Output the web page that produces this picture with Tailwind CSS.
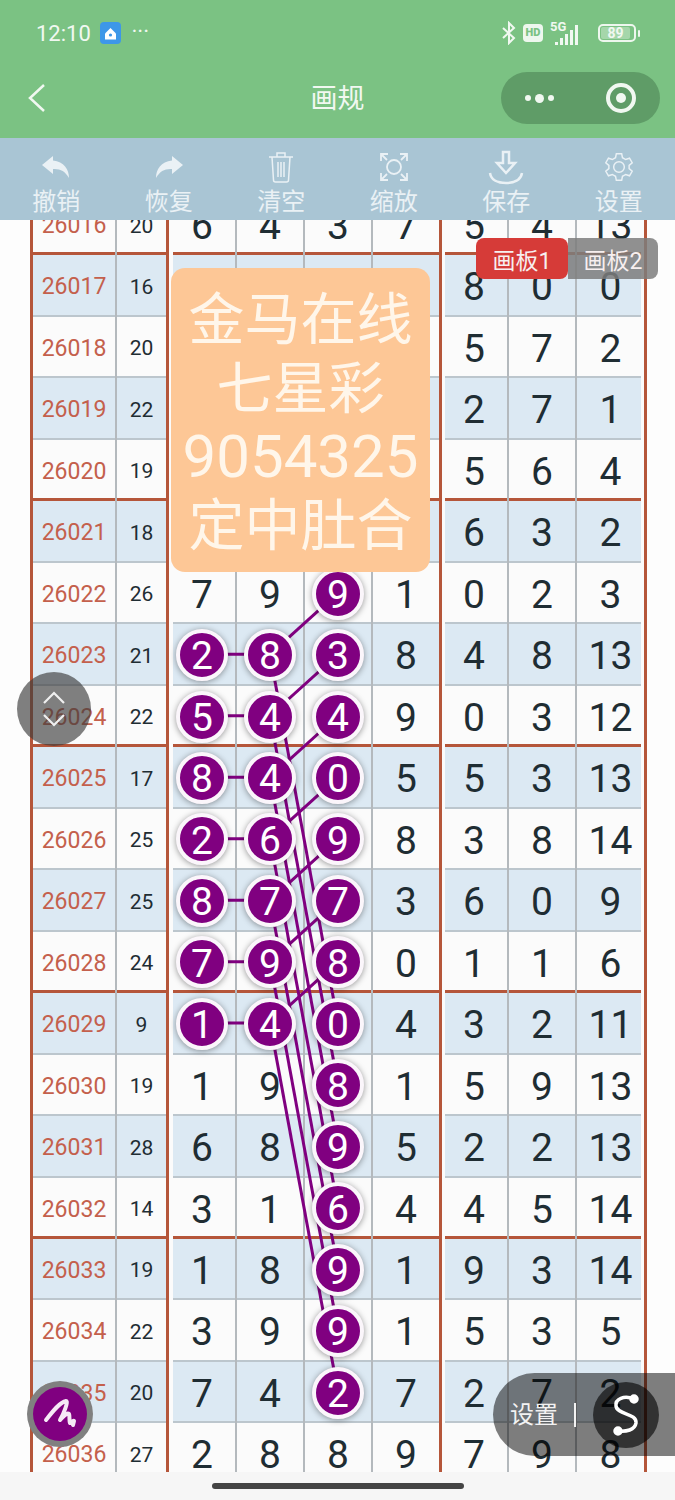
<!DOCTYPE html>
<html lang="en">
  <head>
    <meta charset="UTF-8" />
    <meta name="viewport" content="width=device-width, initial-scale=1.0" />
    <title>画规</title>
    <script src="https://cdn.jsdelivr.net/npm/@tailwindcss/browser@4"></script>
  </head>
  <body class="bg-[#fdfdfd] font-['Roboto','Noto_Sans_CJK_SC',sans-serif]">
    <div class="relative w-[675px] h-[1500px] overflow-hidden flex flex-col">
      <!-- Status bar + nav -->
      <div class="h-[138px] shrink-0 bg-[#7bc283] text-[#f1f8f1]">
        <div class="h-[66px] pl-[36px] pr-[35px] flex items-center">
          <span class="text-[22px] w-[64px]">12:10</span>
          <div class="w-[21px] h-[22px] rounded-[4px] bg-[#3d97e8] flex items-center justify-center">
            <svg width="13" height="13" viewBox="0 0 13 13" fill="#fff"><path d="M6.5 1 12 6.5v6H1v-6z" /><circle cx="6.5" cy="8" r="1.6" fill="#3d97e8" /></svg>
          </div>
          <span class="ml-[11px] mb-[4px] text-[16px] font-bold tracking-[1px]">···</span>
          <div class="ml-auto flex items-center">
            <svg width="16" height="24" viewBox="0 0 16 24" fill="none" stroke="#f1f8f1" stroke-width="2"><path d="M2 7l11 10-5 5V2l5 5L2 17" /></svg>
            <div class="ml-[6px] w-[20px] h-[18px] rounded-[4px] bg-[#eef7ee] text-[#7bc283] text-[11px] font-black leading-[18px] text-center">HD</div>
            <div class="relative ml-[7px] w-[40px] h-[26px]">
              <span class="absolute left-0 top-[-3px] text-[13px] font-bold">5G</span>
              <div class="absolute left-[5px] bottom-[1px] flex items-end gap-[2px]">
                <div class="w-[3px] h-[3px] bg-[#f1f8f1]"></div>
                <div class="w-[3px] h-[7px] bg-[#f1f8f1]"></div>
                <div class="w-[3px] h-[11px] bg-[#f1f8f1]"></div>
                <div class="w-[3px] h-[15px] bg-[#f1f8f1]"></div>
                <div class="w-[3px] h-[20px] bg-[#f1f8f1]"></div>
              </div>
            </div>
            <div class="ml-[8px] w-[38px] h-[18px] rounded-[5px] border-2 border-[#eef7ee] p-[1px]">
              <div class="w-[29px] h-[12px] rounded-[2px] bg-[#a5d6aa] text-[14px] font-bold leading-[12px] text-center">89</div>
            </div>
            <div class="ml-[2px] w-[2px] h-[7px] rounded-full bg-[#eef7ee]"></div>
          </div>
        </div>
        <div class="relative h-[64px] flex items-center justify-center">
          <svg class="absolute left-[27px] top-[17px]" width="19" height="30" viewBox="0 0 19 30" fill="none" stroke="#f1f8f1" stroke-width="2.5"><path d="M17 2 3 15l14 13" /></svg>
          <span class="text-[27px] pt-[2px]">画规</span>
          <div class="absolute left-[501px] top-[6px] w-[159px] h-[52px] rounded-full bg-[#5f9c67] flex items-center">
            <div class="ml-[24px] flex items-center gap-[4px]">
              <div class="w-[6px] h-[6px] rounded-full bg-[#f1f8f1]"></div>
              <div class="w-[9px] h-[9px] rounded-full bg-[#f1f8f1]"></div>
              <div class="w-[6px] h-[6px] rounded-full bg-[#f1f8f1]"></div>
            </div>
            <div class="ml-[52px] w-[30px] h-[30px] rounded-full border-[4px] border-[#f1f8f1] flex items-center justify-center">
              <div class="w-[10px] h-[10px] rounded-full bg-[#f1f8f1]"></div>
            </div>
          </div>
        </div>
      </div>

      <!-- Toolbar -->
      <div class="h-[82px] shrink-0 bg-[#a9c5d4] grid grid-cols-6 text-[#eaf1f5] text-[24px] leading-[32px]">
        <div class="flex flex-col items-center pt-[10px]">
          <div class="h-[38px] flex items-center">
            <svg width="30" height="24" viewBox="0 0 30 24" fill="#eaf1f5"><path d="M12 1 1 10l11 9v-5c7-.5 12 2 16 9 0-9-5-16-16-17.500z" /></svg>
          </div>
          <span>撤销</span>
        </div>
        <div class="flex flex-col items-center pt-[10px]">
          <div class="h-[38px] flex items-center">
            <svg width="30" height="24" viewBox="0 0 30 24" fill="#eaf1f5"><path d="M18 1l11 9-11 9v-5c-7-.5-12 2-16 9 0-9 5-16 16-17.500z" /></svg>
          </div>
          <span>恢复</span>
        </div>
        <div class="flex flex-col items-center pt-[10px]">
          <div class="h-[38px] flex items-center">
            <svg width="26" height="32" viewBox="0 0 26 32" fill="none" stroke="#eaf1f5" stroke-width="1.500"><path d="M1 6h24M9 6V2h8v4M4 6l1.500 23a2 2 0 0 0 2 2h11a2 2 0 0 0 2-2L22 6M10 11v15M13 11v15M16 11v15" /></svg>
          </div>
          <span>清空</span>
        </div>
        <div class="flex flex-col items-center pt-[10px]">
          <div class="h-[38px] flex items-center">
            <svg width="30" height="30" viewBox="0 0 30 30" fill="none" stroke="#eaf1f5" stroke-width="1.800"><path d="M2 9V2h7M21 2h7v7M28 21v7h-7M9 28H2v-7M2 2l6 6M28 2l-6 6M28 28l-6-6M2 28l6-6" /><circle cx="15" cy="15" r="7" /></svg>
          </div>
          <span>缩放</span>
        </div>
        <div class="flex flex-col items-center pt-[10px]">
          <div class="h-[38px] flex items-center">
            <svg width="36" height="35" viewBox="0 0 36 35" fill="none" stroke="#eaf1f5" stroke-width="2.500"><path d="M15 2h6v11h6l-9 10-9-10h6zM2 23c1 7 8 10 16 10s15-3 16-10" /></svg>
          </div>
          <span>保存</span>
        </div>
        <div class="flex flex-col items-center pt-[10px]">
          <div class="h-[38px] flex items-center">
            <svg width="32" height="32" viewBox="0 0 24 24" fill="none" stroke="#eaf1f5" stroke-width="1.100"><path d="M10 2h4l.6 3 2.400 1.400 2.900-1 2 3.400-2.300 2v2.400l2.300 2-2 3.400-2.900-1L14.600 19l-.6 3h-4l-.6-3L7 17.600l-2.900 1-2-3.400 2.300-2v-2.400l-2.300-2 2-3.400 2.900 1L9.400 5z" /><circle cx="12" cy="12" r="4" /></svg>
          </div>
          <span>设置</span>
        </div>
      </div>

      <!-- Chart -->
      <div class="h-[1252px] shrink-0 overflow-hidden">
        <div id="chart" class="relative mt-[-26px] ml-[30px] w-[617px] border-x-3 border-[#b5563a]">
          <div class="absolute left-[133px] inset-y-0 w-[3px] bg-[#b5563a]"></div>
          <div class="absolute left-[406px] inset-y-0 w-[3px] bg-[#b5563a]"></div>
          <svg id="lines" class="absolute left-0 top-0" width="611" height="1350" fill="none" stroke="#800080" stroke-width="3"></svg>
        </div>
      </div>

      <!-- Home indicator -->
      <div class="flex-1 bg-[#f6f6f6] flex items-center justify-center">
        <div class="w-[252px] h-[6px] rounded-full bg-[#444]"></div>
      </div>

      <!-- Board tabs -->
      <div class="absolute left-[476px] top-[238px] flex h-[41px] text-[23px] leading-[48px] text-center text-[#f7efef] z-20">
        <div class="w-[92px] rounded-[8px] bg-[#d63b38]">画板1</div>
        <div class="w-[90px] rounded-r-[8px] bg-[#7c7c7c]/85">画板2</div>
      </div>

      <!-- Ad card -->
      <div class="absolute left-[171px] top-[268px] w-[259px] h-[304px] rounded-[14px] bg-[#fdc796] text-[#fff6ea] text-center text-[56px] leading-[68.600px] pt-[18px] z-20">
        <div>金马在线</div>
        <div>七星彩</div>
        <div class="text-[60px]">9054325</div>
        <div>定中肚合</div>
      </div>

      <!-- Scroll button -->
      <div class="absolute left-[17px] top-[672px] w-[74px] h-[74px] rounded-full bg-[#3c3c3c]/65 flex items-center justify-center z-20">
        <svg width="28" height="40" viewBox="0 0 28 40" fill="none" stroke="#f0f0f0" stroke-width="2.200"><path d="M4 14 14 4l10 10M4 26l10 10 10-10" /></svg>
      </div>

      <!-- Pen button -->
      <div class="absolute left-[27px] top-[1381px] w-[66px] h-[66px] rounded-full bg-[#808080] flex items-center justify-center z-20">
        <div class="w-[54px] h-[54px] rounded-full bg-[#800080]">
          <svg width="54" height="54" viewBox="0 0 54 54" fill="none" stroke="#f6e9f6" stroke-width="4" stroke-linecap="round" stroke-linejoin="round"><path d="M13 33C20 24 27 15 33 14c3 0-3 14-6 19 3-3 7-8 9-6 1 2 0 8 1 9 1 0 3-3 4-2l-1 4" /></svg>
        </div>
      </div>

      <!-- Settings pill -->
      <div class="absolute left-[493px] top-[1373px] w-[182px] h-[83px] rounded-l-[42px] bg-black/50 flex items-center text-[24px] text-[#f2f2f2] z-20">
        <span class="ml-[17px]">设置</span>
        <div class="ml-[16px] w-[2px] h-[24px] bg-[#f2f2f2]"></div>
        <div class="ml-[17px] w-[66px] h-[66px] rounded-full bg-black/60">
          <svg width="66" height="66" viewBox="0 0 66 66" fill="none" stroke="#fff" stroke-width="3.500" stroke-linecap="round"><path d="M41 17C31 13 22 17 23 24c1 9 21 7 20 17-1 7-10 9-18 8" /><circle cx="41" cy="17" r="3" fill="#fff" /><circle cx="25" cy="49" r="3" fill="#fff" /></svg>
        </div>
      </div>
    </div>

    <script>
      // [issue, sum, seven values]; null where the orange card hides the cell
      const rows = [
        ["26016", 20, [6, 4, 3, 7, 5, 4, 13]],
        ["26017", 16, [null, null, null, null, 8, 0, 0]],
        ["26018", 20, [null, null, null, null, 5, 7, 2]],
        ["26019", 22, [null, null, null, null, 2, 7, 1]],
        ["26020", 19, [null, null, null, null, 5, 6, 4]],
        ["26021", 18, [null, null, null, null, 6, 3, 2]],
        ["26022", 26, [7, 9, 9, 1, 0, 2, 3]],
        ["26023", 21, [2, 8, 3, 8, 4, 8, 13]],
        ["26024", 22, [5, 4, 4, 9, 0, 3, 12]],
        ["26025", 17, [8, 4, 0, 5, 5, 3, 13]],
        ["26026", 25, [2, 6, 9, 8, 3, 8, 14]],
        ["26027", 25, [8, 7, 7, 3, 6, 0, 9]],
        ["26028", 24, [7, 9, 8, 0, 1, 1, 6]],
        ["26029", 9, [1, 4, 0, 4, 3, 2, 11]],
        ["26030", 19, [1, 9, 8, 1, 5, 9, 13]],
        ["26031", 28, [6, 8, 9, 5, 2, 2, 13]],
        ["26032", 14, [3, 1, 6, 4, 4, 5, 14]],
        ["26033", 19, [1, 8, 9, 1, 9, 3, 14]],
        ["26034", 22, [3, 9, 9, 1, 5, 3, 5]],
        ["26035", 20, [7, 4, 2, 7, 2, 7, 2]],
        ["26036", 27, [2, 8, 8, 9, 7, 9, 8]],
      ];
      const ROW_H = 61.47;
      const isBall = (r, c) =>
        (r >= 7 && r <= 13 && c <= 2) || (c === 2 && r >= 6 && r <= 19);

      const chart = document.getElementById("chart");
      const lines = document.getElementById("lines");

      rows.forEach(([issue, sum, vals], r) => {
        const row = document.createElement("div");
        const thick = r % 4 === 0;
        const blue = r % 2 === 1;
        row.className = `grid grid-cols-[84px_52px_repeat(6,68px)_67px] h-[61.47px] ${
          thick ? "border-b-3 border-[#b5563a]" : "border-b-2 border-[#bcc6cd]"
        } ${blue ? "bg-[#dce9f3]" : "bg-[#fbfbfb]"}`;

        let html = `<div class="flex items-center justify-center pt-[3px] border-r-2 border-[#b4b9bd] text-[23px] text-[#c4604c]">${issue}</div>`;
        html += `<div class="flex items-center justify-center pt-[3px] pr-[3px] text-[21px] text-[#1f2d33]">${sum}</div>`;
        vals.forEach((v, c) => {
          const gapL = c === 0 || c === 4 ? "bg-[linear-gradient(to_right,#fbfbfb_4px,transparent_4px)]" : "";
          const gapR = c === 6 ? "bg-[linear-gradient(to_left,#fbfbfb_3px,transparent_3px)]" : "border-r-2 border-[#b4b9bd]";
          const ball = isBall(r, c);
          const inner = ball
            ? `<div class="relative z-10 w-[52px] h-[52px] shrink-0 rounded-full bg-[#800080] border-[4px] border-[#fbf6fb] shadow-[0_1px_6px_rgba(0,0,0,0.4)] flex items-center justify-center pt-[3px] text-white">${v}</div>`
            : `<span class="pt-[3px]">${v === null ? "" : v}</span>`;
          html += `<div class="flex items-center justify-center text-[39px] text-[#1f2d33] ${gapL} ${gapR}">${inner}</div>`;
        });
        row.innerHTML = html;
        chart.appendChild(row);
      });

      const X = [169, 237, 305];
      const Y = (r) => r * ROW_H + 30;
      const addLine = (x1, y1, x2, y2) => {
        const l = document.createElementNS("http://www.w3.org/2000/svg", "line");
        l.setAttribute("x1", x1);
        l.setAttribute("y1", y1);
        l.setAttribute("x2", x2);
        l.setAttribute("y2", y2);
        lines.appendChild(l);
      };
      for (let r = 7; r <= 13; r++) {
        addLine(X[0], Y(r), X[1], Y(r));
        addLine(X[2], Y(r - 1), X[1], Y(r));
        addLine(X[1], Y(r), X[2], Y(r + 6));
      }
    </script>
  </body>
</html>
